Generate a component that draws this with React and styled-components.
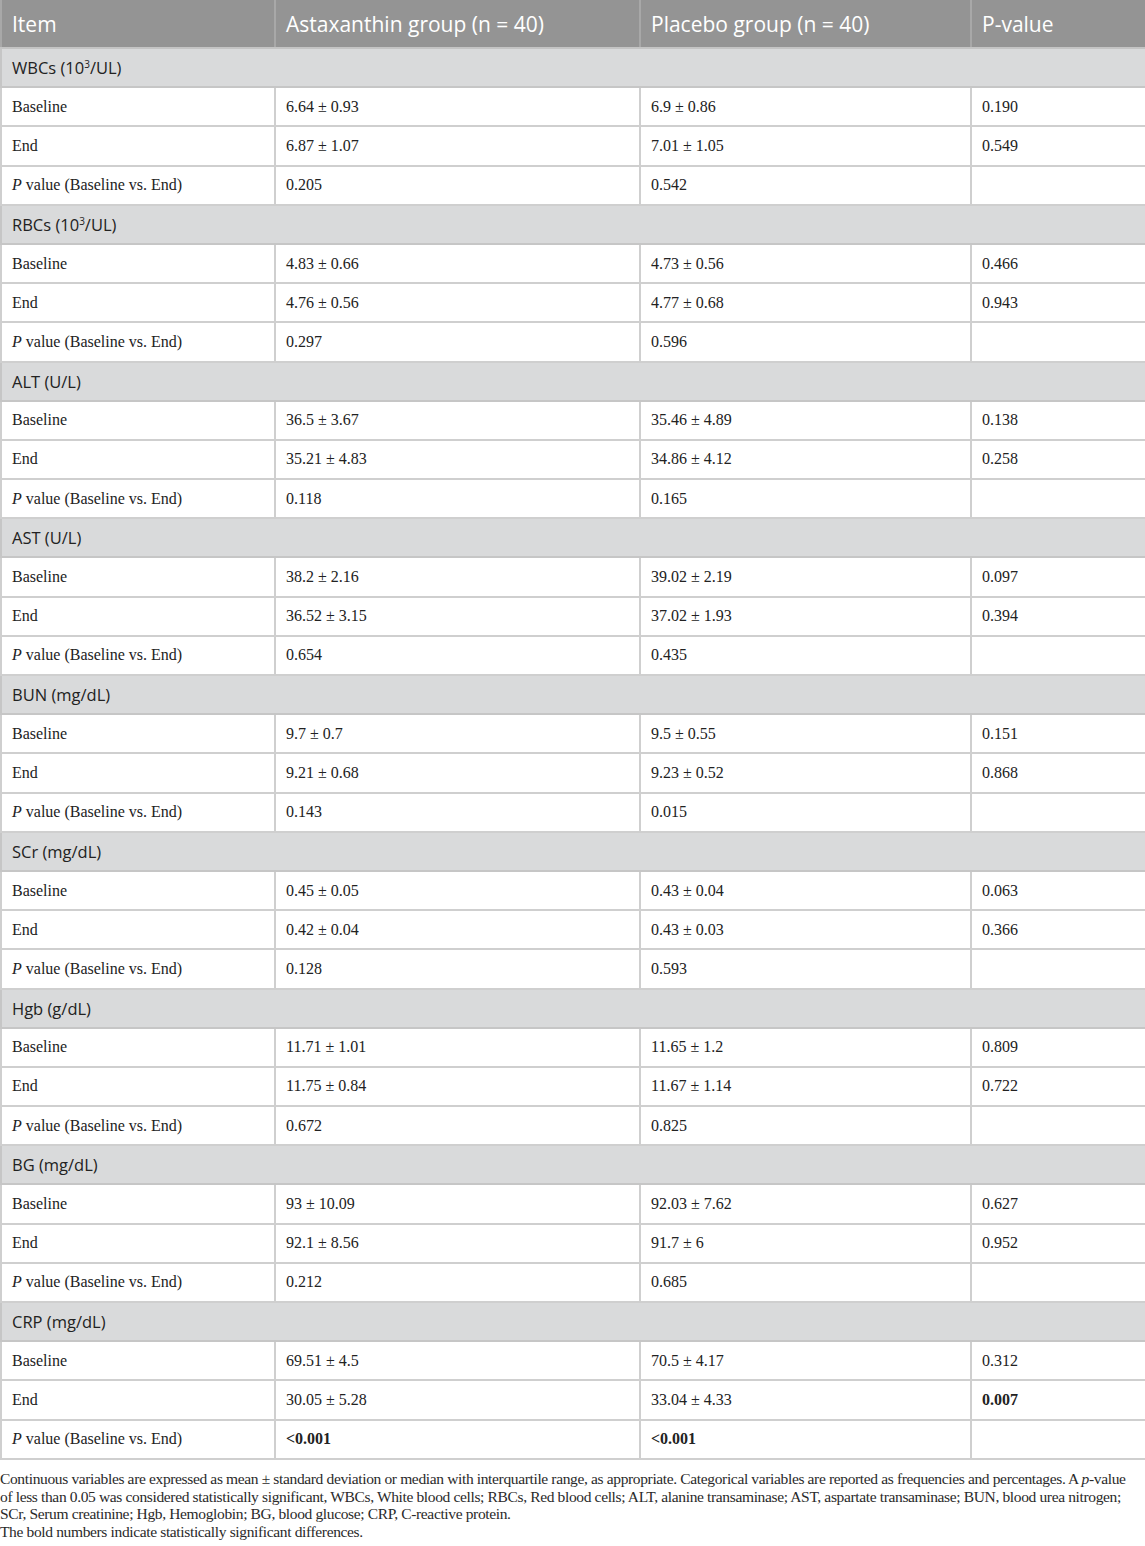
import React from 'react';
import styled, { createGlobalStyle } from 'styled-components';

const GlobalStyle = createGlobalStyle`
  body {
    margin: 0;
    background: #ffffff;
  }
`

const Page = styled.div`
  width: 1145px;
`

const Table = styled.table`
  width: 1145px;
  border-collapse: collapse;
  table-layout: fixed;
`

const HeadCell = styled.th`
  background: #949494;
  color: #ffffff;
  font-family: "Open Sans", "Noto Sans", sans-serif;
  font-weight: 400;
  font-size: 21px;
  text-align: left;
  height: 47px;
  padding: 0 10px;
  border: 2px solid #a8a8a8;
  border-top: none;
  border-bottom: 2px solid #c4c4c4;
`

const SectionCell = styled.td`
  background: #d9dadb;
  color: #222;
  font-family: "Open Sans", "Noto Sans", sans-serif;
  font-size: 16.5px;
  height: 37.2px;
  padding: 0 10px;
  border: 2px solid #c6c6c6;

  sup {
    font-size: 10px;
    vertical-align: 6px;
    line-height: 0;
  }
`

const Cell = styled.td`
  color: #222;
  font-family: "Liberation Serif", "Times New Roman", serif;
  font-size: 16px;
  font-weight: ${p => (p.$bold ? 700 : 400)};
  height: 37.2px;
  padding: 0 10px;
  border: 2px solid #cfcfcf;
  white-space: nowrap;
`

const Note = styled.div`
  font-family: "Liberation Serif", "Times New Roman", serif;
  font-size: 15.5px;
  letter-spacing: -0.36px;
  line-height: 17.8px;
  color: #2a2a2a;
  padding: 10px 8px 0 0;
`

const NoBreak = styled.span`
  white-space: nowrap;
`

const groups = [
  { name: <>WBCs (10<sup>3</sup>/UL)</>, rows: [['6.64 ± 0.93', '6.9 ± 0.86', '0.190'], ['6.87 ± 1.07', '7.01 ± 1.05', '0.549'], ['0.205', '0.542']] },
  { name: <>RBCs (10<sup>3</sup>/UL)</>, rows: [['4.83 ± 0.66', '4.73 ± 0.56', '0.466'], ['4.76 ± 0.56', '4.77 ± 0.68', '0.943'], ['0.297', '0.596']] },
  { name: 'ALT (U/L)', rows: [['36.5 ± 3.67', '35.46 ± 4.89', '0.138'], ['35.21 ± 4.83', '34.86 ± 4.12', '0.258'], ['0.118', '0.165']] },
  { name: 'AST (U/L)', rows: [['38.2 ± 2.16', '39.02 ± 2.19', '0.097'], ['36.52 ± 3.15', '37.02 ± 1.93', '0.394'], ['0.654', '0.435']] },
  { name: 'BUN (mg/dL)', rows: [['9.7 ± 0.7', '9.5 ± 0.55', '0.151'], ['9.21 ± 0.68', '9.23 ± 0.52', '0.868'], ['0.143', '0.015']] },
  { name: 'SCr (mg/dL)', rows: [['0.45 ± 0.05', '0.43 ± 0.04', '0.063'], ['0.42 ± 0.04', '0.43 ± 0.03', '0.366'], ['0.128', '0.593']] },
  { name: 'Hgb (g/dL)', rows: [['11.71 ± 1.01', '11.65 ± 1.2', '0.809'], ['11.75 ± 0.84', '11.67 ± 1.14', '0.722'], ['0.672', '0.825']] },
  { name: 'BG (mg/dL)', rows: [['93 ± 10.09', '92.03 ± 7.62', '0.627'], ['92.1 ± 8.56', '91.7 ± 6', '0.952'], ['0.212', '0.685']] },
  { name: 'CRP (mg/dL)', rows: [['69.51 ± 4.5', '70.5 ± 4.17', '0.312'], ['30.05 ± 5.28', '33.04 ± 4.33', '0.007'], ['<0.001', '<0.001']], bold: true },
]

const App = () => {
  return (
    <Page>
      <GlobalStyle />
      <Table>
        <colgroup>
          <col style={{ width: 274 }} />
          <col style={{ width: 365 }} />
          <col style={{ width: 331 }} />
          <col style={{ width: 175 }} />
        </colgroup>
        <thead>
          <tr>
            <HeadCell>Item</HeadCell>
            <HeadCell>Astaxanthin group (n = 40)</HeadCell>
            <HeadCell>Placebo group (n = 40)</HeadCell>
            <HeadCell>P-value</HeadCell>
          </tr>
        </thead>
        <tbody>
          {groups.map((g, i) => (
            <React.Fragment key={i}>
              <tr>
                <SectionCell colSpan={4}>{g.name}</SectionCell>
              </tr>
              <tr>
                <Cell>Baseline</Cell>
                <Cell>{g.rows[0][0]}</Cell>
                <Cell>{g.rows[0][1]}</Cell>
                <Cell>{g.rows[0][2]}</Cell>
              </tr>
              <tr>
                <Cell>End</Cell>
                <Cell>{g.rows[1][0]}</Cell>
                <Cell>{g.rows[1][1]}</Cell>
                <Cell $bold={g.bold}>{g.rows[1][2]}</Cell>
              </tr>
              <tr>
                <Cell><i>P</i> value (Baseline vs. End)</Cell>
                <Cell $bold={g.bold}>{g.rows[2][0]}</Cell>
                <Cell $bold={g.bold}>{g.rows[2][1]}</Cell>
                <Cell></Cell>
              </tr>
            </React.Fragment>
          ))}
        </tbody>
      </Table>
      <Note>
        Continuous variables are expressed as mean ± standard deviation or median with interquartile range, as appropriate. Categorical variables are reported as frequencies and percentages. A <NoBreak><i>p</i>-value</NoBreak> of less than 0.05 was considered statistically significant, WBCs, White blood cells; RBCs, Red blood cells; ALT, alanine transaminase; AST, aspartate transaminase; BUN, blood urea nitrogen; SCr, Serum creatinine; Hgb, Hemoglobin; BG, blood glucose; CRP, C-reactive protein.
        <br />
        The bold numbers indicate statistically significant differences.
      </Note>
    </Page>
  )
}

export default App;
